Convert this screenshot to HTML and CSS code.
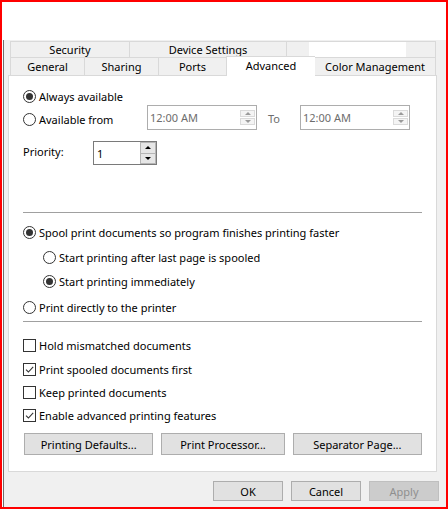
FILE: index.html
```html
<!DOCTYPE html>
<html>
<head>
<meta charset="utf-8">
<link rel="stylesheet" href="styles.css">
</head>
<body>
<div class="frame">
  <div class="top"></div>
  <div class="dialog">
    <div class="tabs">
      <div class="tabrow row1">
        <div class="tab w-security">Security</div>
        <div class="tab w-device">Device Settings</div>
        <div class="tab w-blank"><span class="mask"></span></div>
      </div>
      <div class="tabrow row2">
        <div class="tab w-general">General</div>
        <div class="tab w-sharing">Sharing</div>
        <div class="tab w-ports">Ports</div>
        <div class="tab w-advanced active">Advanced</div>
        <div class="tab w-color">Color Management</div>
      </div>
    </div>

    <div class="panel">
      <div class="opt first"><span class="radio on"></span><span>Always available</span></div>
      <div class="avail-row">
        <div class="opt avail-label"><span class="radio"></span><span>Available from</span></div>
        <div class="field time">
          <span class="val">12:00 AM</span>
          <span class="spin small"><span class="sb"><i class="up"></i></span><span class="sb"><i class="down"></i></span></span>
        </div>
        <span class="to">To</span>
        <div class="field time">
          <span class="val">12:00 AM</span>
          <span class="spin small"><span class="sb"><i class="up"></i></span><span class="sb"><i class="down"></i></span></span>
        </div>
      </div>
      <div class="prio-row">
        <span class="prio-label">Priority:</span>
        <div class="field prio">
          <span class="val">1</span>
          <span class="spin big"><span class="sb"><i class="up"></i></span><span class="sb"><i class="down"></i></span></span>
        </div>
      </div>

      <div class="sep sep1"></div>

      <div class="opt g-spool"><span class="radio on"></span><span>Spool print documents so program finishes printing faster</span></div>
      <div class="opt sub g-after"><span class="radio"></span><span>Start printing after last page is spooled</span></div>
      <div class="opt sub g-imm"><span class="radio on"></span><span>Start printing immediately</span></div>
      <div class="opt g-direct"><span class="radio"></span><span>Print directly to the printer</span></div>

      <div class="sep sep2"></div>

      <div class="opt g-hold"><span class="check"></span><span>Hold mismatched documents</span></div>
      <div class="opt g-c1"><span class="check on"><svg viewBox="0 0 11 11" width="11" height="11"><path d="M2 5.6 L4.4 8 L9.2 2.8" fill="none" stroke="#333" stroke-width="1.1"/></svg></span><span>Print spooled documents first</span></div>
      <div class="opt g-c"><span class="check"></span><span>Keep printed documents</span></div>
      <div class="opt g-c"><span class="check on"><svg viewBox="0 0 11 11" width="11" height="11"><path d="M2 5.6 L4.4 8 L9.2 2.8" fill="none" stroke="#333" stroke-width="1.1"/></svg></span><span>Enable advanced printing features</span></div>

      <div class="btnrow">
        <button class="btn b-defaults">Printing Defaults...</button>
        <button class="btn b-proc">Print Processor...</button>
        <button class="btn b-sep">Separator Page...</button>
      </div>
    </div>

    <div class="actions">
      <button class="btn act">OK</button>
      <button class="btn act">Cancel</button>
      <button class="btn act disabled">Apply</button>
    </div>
  </div>
</div>
</body>
</html>
```

FILE: styles.css
```css
* { box-sizing: border-box; }
html, body { margin: 0; padding: 0; background: #fff; }
body {
  font-family: "Segoe UI", "Noto Sans", "DejaVu Sans", sans-serif;
  font-size: 11px;
  color: #000;
}
.frame {
  width: 448px;
  height: 509px;
  border: 2px solid #ff0000;
  background: #fff;
  display: flex;
  flex-direction: column;
}
.top { height: 38px; flex: none; }
.dialog {
  flex: 1;
  background: #f0f0f0;
  margin-left: 1px;
  border-left: 1px solid #6e6e6e;
  padding: 1px 0 0 4px;
  display: flex;
  flex-direction: column;
}
.tabs { margin-left: 2px; width: 426px; }
.tabrow { display: flex; }
.row1 { height: 16px; }
.row2 { height: 18px; }
.tab {
  border: 1px solid #d9d9d9;
  border-right: none;
  border-bottom: none;
  background: #f0f0f0;
  display: flex;
  align-items: center;
  justify-content: center;
  white-space: nowrap;
  line-height: 14px;
}
.tab:last-child { border-right: 1px solid #d9d9d9; }
.row1 .tab { height: 16px; }
.row2 .tab { height: 18px; }
.tab.active {
  background: #fff;
  height: 20px;
  margin-top: -1px;
  padding-bottom: 2px;
  position: relative;
  z-index: 1;
}
.tab.active + .tab { border-left: none; }
.w-security { width: 119px; }
.w-device { width: 157px; }
.w-blank { width: 150px; justify-content: flex-start; align-items: flex-start; }
.mask { display: block; width: 97px; height: 15px; background: #fff; margin-left: 22px; }
.w-general { width: 74px; }
.w-sharing { width: 74px; }
.w-ports { width: 68px; }
.w-advanced { width: 89px; }
.w-color { width: 121px; }

.panel {
  width: 429px;
  height: 397px;
  background: #fff;
  border: 1px solid #d9d9d9;
  padding: 11px 14px 0 14px;
  display: flex;
  flex-direction: column;
}
.opt {
  display: flex;
  align-items: center;
  height: 18px;
  gap: 3px;
  white-space: nowrap;
}
.radio {
  width: 13px;
  height: 13px;
  flex: none;
  border: 1px solid #333;
  border-radius: 50%;
  background: #fff;
  display: flex;
  align-items: center;
  justify-content: center;
}
.radio.on::after {
  content: "";
  width: 7px;
  height: 7px;
  border-radius: 50%;
  background: #333;
}
.check {
  width: 13px;
  height: 13px;
  flex: none;
  border: 1px solid #333;
  background: #fff;
  display: flex;
  align-items: center;
  justify-content: center;
}
.check svg { display: block; }
.sub { margin-left: 20px; }

.avail-row {
  display: flex;
  align-items: center;
  height: 25px;
}
.avail-label { width: 124px; padding-top: 4px; }
.field {
  display: flex;
  align-items: center;
  background: #fff;
  border: 1px solid #7a7a7a;
}
.time {
  width: 110px;
  height: 25px;
  border-color: #adadad;
  padding-left: 2px;
  color: #6d6d6d;
}
.to { width: 43px; padding-left: 11px; color: #6d6d6d; padding-top: 2px; }
.val { flex: 1; }
.spin { display: flex; flex-direction: column; flex: none; }
.spin.small { width: 15px; height: 15px; margin-right: 1px; gap: 1px; }
.spin.small .sb {
  flex: 1;
  background: #f4f4f4;
  border: 1px solid #dadada;
  display: flex;
  align-items: center;
  justify-content: center;
}
.spin.small i.up { border-bottom-color: #9a9a9a; }
.spin.small i.down { border-top-color: #9a9a9a; }
.sb i { display: block; width: 0; height: 0; border-left: 3px solid transparent; border-right: 3px solid transparent; }
.sb i.up { border-bottom: 3px solid #000; }
.sb i.down { border-top: 3px solid #000; }

.prio-row {
  display: flex;
  align-items: center;
  height: 24px;
  margin-top: 11px;
}
.prio-label { width: 70px; padding-bottom: 3px; }
.prio { width: 64px; height: 24px; padding-left: 3px; }
.spin.big { width: 16px; height: 22px; }
.spin.big .sb {
  flex: 1;
  background: #e6e6e6;
  border: 1px solid #b5b5b5;
  display: flex;
  align-items: center;
  justify-content: center;
}
.spin.big .sb + .sb { border-top: none; }

.sep { height: 1px; background: #a0a0a0; flex: none; }
.sep1 { margin-top: 47px; }
.g-spool { margin-top: 10px; }
.g-after { margin-top: 7px; }
.g-imm { margin-top: 6px; }
.g-direct { margin-top: 8px; }
.sep2 { margin-top: 5px; }
.g-hold { margin-top: 14px; }
.g-c1 { margin-top: 6px; }
.g-c { margin-top: 5px; }

.btnrow {
  display: flex;
  gap: 8px;
  margin-top: 9px;
  padding-left: 1px;
}
.btn {
  font-family: inherit;
  font-size: 11px;
  color: #000;
  background: #e1e1e1;
  border: 1px solid #adadad;
  height: 22px;
  padding: 0;
  margin: 0;
  display: flex;
  align-items: center;
  justify-content: center;
}
.b-defaults { width: 130px; }
.b-proc { width: 124px; }
.b-sep { width: 130px; }

.actions {
  display: flex;
  justify-content: flex-end;
  gap: 8px;
  margin-top: 9px;
  padding-right: 7px;
}
.btn.act { width: 70px; height: 20px; }
.btn.disabled { background: #cccccc; border-color: #bfbfbf; color: #8f8f8f; }
```
